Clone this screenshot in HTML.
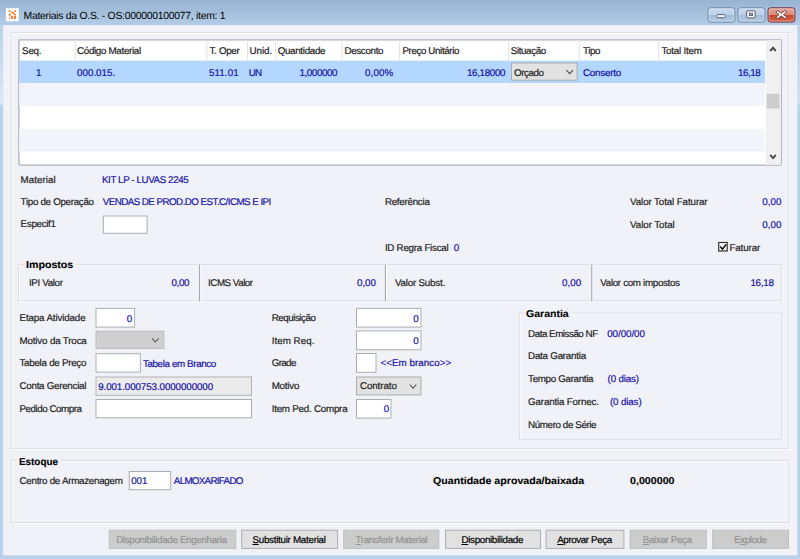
<!DOCTYPE html>
<html lang="pt-BR">
<head>
<meta charset="utf-8">
<title>Materiais da O.S.</title>
<style>
html,body{margin:0;padding:0;}
body{width:800px;height:559px;overflow:hidden;position:relative;background:#b9d1ea;font-family:"Liberation Sans",sans-serif;font-size:9.6px;}
#bg{position:absolute;left:0;top:0;width:800px;height:559px;display:block;}
.t{position:absolute;white-space:pre;line-height:14px;height:14px;font-size:9.8px;text-rendering:geometricPrecision;-webkit-text-stroke:0.2px currentColor;}
.t u{text-decoration:underline;text-underline-offset:1px;text-decoration-thickness:1px;}
</style>
</head>
<body>
<svg id="bg" width="800" height="559" viewBox="0 0 800 559">
<defs>
<linearGradient id="gt" x1="0" y1="0" x2="0" y2="1"><stop offset="0" stop-color="#98b3d2"/><stop offset="0.5" stop-color="#a5c0dc"/><stop offset="1" stop-color="#b3cde8"/></linearGradient>
<linearGradient id="gs" x1="0" y1="0" x2="0" y2="1"><stop offset="0" stop-color="#b9d1ea"/><stop offset="1" stop-color="#dde8f5"/></linearGradient>
<linearGradient id="gs2" x1="0" y1="0" x2="0" y2="1"><stop offset="0" stop-color="#b9d1ea"/><stop offset="1" stop-color="#d2e0f1"/></linearGradient>
<linearGradient id="gb" x1="0" y1="0" x2="0" y2="1"><stop offset="0" stop-color="#c6d8ee"/><stop offset="0.48" stop-color="#bcd0e9"/><stop offset="0.52" stop-color="#a3bcd9"/><stop offset="1" stop-color="#b4cbe6"/></linearGradient>
<linearGradient id="gr" x1="0" y1="0" x2="0" y2="1"><stop offset="0" stop-color="#e9a99a"/><stop offset="0.48" stop-color="#de8674"/><stop offset="0.52" stop-color="#c7452a"/><stop offset="1" stop-color="#d4674b"/></linearGradient>
</defs>
<rect x="0" y="0" width="800" height="559" fill="#b9d1ea"/><rect x="0" y="0" width="800" height="25.5" fill="url(#gt)"/>
<rect x="0" y="25" width="3.5" height="79.6" fill="url(#gs)"/>
<rect x="796.8" y="25" width="3.2" height="79.6" fill="url(#gs2)"/>
<rect x="3.00" y="25.00" width="794.50" height="530.50" fill="#e4ebf5"/>
<rect x="3.50" y="25.50" width="793.50" height="529.50" fill="#f1f2f8"/>
<g transform="translate(5.9 8.2)"><rect width="12.8" height="13.1" fill="#fefefe"/><g fill="#fb7c2c" stroke="#fb7c2c" stroke-linecap="round"><circle cx="3.7" cy="3.1" r="1" stroke="none"/><circle cx="9.2" cy="3.1" r="0.95" stroke="none"/><line x1="5.9" y1="4.0" x2="9.3" y2="6.5" stroke-width="1.6"/><ellipse cx="3.9" cy="6.5" rx="1.05" ry="1.15" stroke="none" transform="rotate(35 3.9 6.5)"/><circle cx="3.6" cy="10.0" r="0.7" stroke="none"/><rect x="4.9" y="7.6" width="2" height="3.2" rx="0.6" stroke="none"/><rect x="8.1" y="7.5" width="2" height="3.3" rx="0.6" stroke="none"/></g></g>
<rect x="708.10" y="7.80" width="26.80" height="14.30" fill="url(#gb)" stroke="#6f86a3" stroke-width="1" rx="2.5"/>
<rect x="709.10" y="8.80" width="24.80" height="12.30" fill="none" stroke="rgba(255,255,255,0.4)" stroke-width="1" rx="1.8"/>
<rect x="738.10" y="7.80" width="26.80" height="14.30" fill="url(#gb)" stroke="#6f86a3" stroke-width="1" rx="2.5"/>
<rect x="739.10" y="8.80" width="24.80" height="12.30" fill="none" stroke="rgba(255,255,255,0.4)" stroke-width="1" rx="1.8"/>
<rect x="768.10" y="7.80" width="26.80" height="14.30" fill="url(#gr)" stroke="#70303a" stroke-width="1" rx="2.5"/>
<rect x="769.10" y="8.80" width="24.80" height="12.30" fill="none" stroke="rgba(255,255,255,0.4)" stroke-width="1" rx="1.8"/>
<rect x="716.70" y="14.60" width="8.80" height="3.10" fill="#f3f3f5" stroke="#5a6270" stroke-width="1" rx="1"/>
<rect x="746.70" y="10.80" width="8.50" height="7.10" fill="#f3f3f5" stroke="#5a6270" stroke-width="1" rx="1"/>
<rect x="749.45" y="13.25" width="3.10" height="2.30" fill="#8fa6c4" stroke="#5a6270" stroke-width="0.9"/>
<g transform="translate(774.8 9.1)"><path d="M2.6 1.3 L6.5 4.1 L10.4 1.3 L12 3.1 L8.7 5.5 L12 7.9 L10.4 9.7 L6.5 6.9 L2.6 9.7 L1 7.9 L4.3 5.5 L1 3.1 Z" fill="#f6f6f6" stroke="#5b4048" stroke-width="0.9" stroke-linejoin="round"/></g>
<rect x="12.00" y="33.50" width="777.70" height="416.00" fill="none" stroke="#fcfcfe" stroke-width="1"/>
<rect x="11.00" y="32.50" width="777.70" height="416.00" fill="none" stroke="#e0e0e4" stroke-width="1"/>
<rect x="18.90" y="39.90" width="762.30" height="125.20" fill="#fff" stroke="#b0b2ba" stroke-width="1.4" rx="1"/>
<rect x="19.20" y="60.60" width="745.90" height="22.50" fill="#b3d7ff"/>
<rect x="19.20" y="83.10" width="745.70" height="22.90" fill="#f3f4fa"/>
<rect x="19.20" y="128.80" width="745.70" height="22.80" fill="#f3f4fa"/>
<line x1="75.20" y1="40.20" x2="75.20" y2="60.40" stroke="#e3e3e3" stroke-width="1"/>
<line x1="206.80" y1="40.20" x2="206.80" y2="60.40" stroke="#e3e3e3" stroke-width="1"/>
<line x1="247.60" y1="40.20" x2="247.60" y2="60.40" stroke="#e3e3e3" stroke-width="1"/>
<line x1="275.70" y1="40.20" x2="275.70" y2="60.40" stroke="#e3e3e3" stroke-width="1"/>
<line x1="341.90" y1="40.20" x2="341.90" y2="60.40" stroke="#e3e3e3" stroke-width="1"/>
<line x1="399.40" y1="40.20" x2="399.40" y2="60.40" stroke="#e3e3e3" stroke-width="1"/>
<line x1="508.60" y1="40.20" x2="508.60" y2="60.40" stroke="#e3e3e3" stroke-width="1"/>
<line x1="579.30" y1="40.20" x2="579.30" y2="60.40" stroke="#e3e3e3" stroke-width="1"/>
<line x1="658.70" y1="40.20" x2="658.70" y2="60.40" stroke="#e3e3e3" stroke-width="1"/>
<rect x="765.90" y="40.20" width="15.00" height="124.60" fill="#f0f0f0"/>
<rect x="766.60" y="93.80" width="12.80" height="14.80" fill="#cdcdcd"/>
<path d="M770.20 51.00 L773.00 47.80 L775.80 51.00" fill="none" stroke="#484848" stroke-width="1.9"/>
<path d="M770.20 154.90 L773.00 158.10 L775.80 154.90" fill="none" stroke="#484848" stroke-width="1.9"/>
<rect x="511.50" y="63.00" width="65.60" height="17.20" fill="#e2e2e2" stroke="#acacac" stroke-width="1"/>
<path d="M566.40 70.10 L569.70 73.70 L573.00 70.10" fill="none" stroke="#4f4f4f" stroke-width="1.1"/>
<rect x="103.30" y="216.00" width="43.80" height="17.30" fill="#fff" stroke="#abadb3" stroke-width="1"/>
<rect x="718.70" y="242.50" width="8.50" height="8.50" fill="#fff" stroke="#303030" stroke-width="1.2"/>
<path d="M720.2 246.6 L722.4 249.2 L726 244.4" fill="none" stroke="#111" stroke-width="1.6"/>
<rect x="19.50" y="265.70" width="762.80" height="36.00" fill="none" stroke="#fcfcfe" stroke-width="1"/>
<rect x="18.50" y="264.70" width="762.80" height="36.00" fill="none" stroke="#dcdce0" stroke-width="1"/>
<rect x="24.00" y="258.00" width="52.00" height="12.00" fill="#f1f2f8"/>
<line x1="200.60" y1="264.70" x2="200.60" y2="301.20" stroke="#ffffff" stroke-width="1"/>
<line x1="199.60" y1="264.70" x2="199.60" y2="301.20" stroke="#a2a2a2" stroke-width="1"/>
<line x1="386.40" y1="264.70" x2="386.40" y2="301.20" stroke="#ffffff" stroke-width="1"/>
<line x1="385.40" y1="264.70" x2="385.40" y2="301.20" stroke="#a2a2a2" stroke-width="1"/>
<line x1="592.80" y1="264.70" x2="592.80" y2="301.20" stroke="#ffffff" stroke-width="1"/>
<line x1="591.80" y1="264.70" x2="591.80" y2="301.20" stroke="#a2a2a2" stroke-width="1"/>
<rect x="96.00" y="308.40" width="38.60" height="18.70" fill="#fff" stroke="#abadb3" stroke-width="1"/>
<rect x="96.00" y="331.20" width="67.90" height="17.40" fill="#cfcfcf" stroke="#bcbcbc" stroke-width="1"/>
<path d="M152.00 338.40 L155.30 342.00 L158.60 338.40" fill="none" stroke="#5a5a5a" stroke-width="1.1"/>
<rect x="96.00" y="353.70" width="44.40" height="18.40" fill="#fff" stroke="#abadb3" stroke-width="1"/>
<rect x="96.00" y="377.00" width="155.50" height="18.30" fill="#ebebeb" stroke="#b2b2b2" stroke-width="1"/>
<rect x="96.00" y="399.50" width="155.50" height="18.30" fill="#fff" stroke="#abadb3" stroke-width="1"/>
<rect x="356.50" y="308.40" width="64.50" height="18.70" fill="#fff" stroke="#abadb3" stroke-width="1"/>
<rect x="356.50" y="331.00" width="64.50" height="18.80" fill="#fff" stroke="#abadb3" stroke-width="1"/>
<rect x="356.50" y="353.50" width="19.50" height="18.80" fill="#fff" stroke="#abadb3" stroke-width="1"/>
<rect x="356.50" y="377.00" width="64.50" height="17.90" fill="#e2e2e2" stroke="#acacac" stroke-width="1"/>
<path d="M409.70 384.50 L413.00 388.10 L416.30 384.50" fill="none" stroke="#4f4f4f" stroke-width="1.1"/>
<rect x="356.50" y="399.50" width="34.50" height="18.60" fill="#fff" stroke="#abadb3" stroke-width="1"/>
<rect x="520.20" y="314.10" width="262.60" height="126.60" fill="none" stroke="#fcfcfe" stroke-width="1"/>
<rect x="519.20" y="313.10" width="262.60" height="126.60" fill="none" stroke="#dcdce0" stroke-width="1"/>
<rect x="524.00" y="307.00" width="48.00" height="12.00" fill="#f1f2f8"/>
<rect x="12.00" y="461.40" width="778.10" height="62.10" fill="none" stroke="#fcfcfe" stroke-width="1"/>
<rect x="11.00" y="460.40" width="778.10" height="62.10" fill="none" stroke="#dcdce0" stroke-width="1"/>
<rect x="16.50" y="454.00" width="44.00" height="12.00" fill="#f1f2f8"/>
<rect x="129.30" y="471.50" width="41.40" height="18.20" fill="#fff" stroke="#abadb3" stroke-width="1"/>
<rect x="109.20" y="530.20" width="126.60" height="18.20" fill="#cccccc" stroke="#bfbfbf" stroke-width="1"/>
<rect x="241.70" y="530.20" width="95.90" height="18.20" fill="#e1e1e1" stroke="#adadad" stroke-width="1"/>
<rect x="343.70" y="530.20" width="95.10" height="18.20" fill="#cccccc" stroke="#bfbfbf" stroke-width="1"/>
<rect x="445.60" y="530.20" width="95.00" height="18.20" fill="#e1e1e1" stroke="#adadad" stroke-width="1"/>
<rect x="546.10" y="530.20" width="77.80" height="18.20" fill="#e1e1e1" stroke="#adadad" stroke-width="1"/>
<rect x="630.10" y="530.20" width="76.30" height="18.20" fill="#cccccc" stroke="#bfbfbf" stroke-width="1"/>
<rect x="712.60" y="530.20" width="75.90" height="18.20" fill="#cccccc" stroke="#bfbfbf" stroke-width="1"/>
</svg>
<span class="t" style="left:23.5px;top:10px;color:#000;letter-spacing:-0.27px;-webkit-text-stroke:0;font-size:10.4px;">Materiais da O.S. - OS:000000100077, item: 1</span>
<span class="t" style="left:22.1px;top:45px;color:#1e1e1e;letter-spacing:-0.24px;">Seq.</span>
<span class="t" style="left:77px;top:45px;color:#1e1e1e;letter-spacing:-0.32px;">Código Material</span>
<span class="t" style="left:209.5px;top:45px;color:#1e1e1e;letter-spacing:-0.31px;">T. Oper</span>
<span class="t" style="left:249.5px;top:45px;color:#1e1e1e;letter-spacing:-0.04px;">Unid.</span>
<span class="t" style="left:277.7px;top:45px;color:#1e1e1e;letter-spacing:-0.32px;">Quantidade</span>
<span class="t" style="left:344.4px;top:45px;color:#1e1e1e;letter-spacing:-0.33px;">Desconto</span>
<span class="t" style="left:402.4px;top:45px;color:#1e1e1e;letter-spacing:-0.39px;">Preço Unitário</span>
<span class="t" style="left:510.8px;top:45px;color:#1e1e1e;letter-spacing:-0.4px;">Situação</span>
<span class="t" style="left:583px;top:45px;color:#1e1e1e;letter-spacing:-0.42px;">Tipo</span>
<span class="t" style="left:661.4px;top:45px;color:#1e1e1e;letter-spacing:-0.22px;">Total Item</span>
<span class="t" style="left:36px;top:67px;color:#1812a6;">1</span>
<span class="t" style="left:77px;top:67px;color:#1812a6;letter-spacing:0.01px;">000.015.</span>
<span class="t" style="left:208.9px;top:67px;color:#1812a6;letter-spacing:0.12px;">511.01</span>
<span class="t" style="left:248.7px;top:67px;color:#1812a6;letter-spacing:-0.8px;">UN</span>
<span class="t" style="left:299.5px;top:67px;color:#1812a6;letter-spacing:-0.42px;">1,000000</span>
<span class="t" style="left:365px;top:67px;color:#1812a6;letter-spacing:0.13px;">0,00%</span>
<span class="t" style="left:467px;top:67px;color:#1812a6;letter-spacing:-0.34px;">16,18000</span>
<span class="t" style="left:514px;top:67px;color:#1e1e1e;letter-spacing:-0.44px;">Orçado</span>
<span class="t" style="left:583px;top:67px;color:#1812a6;letter-spacing:-0.21px;">Conserto</span>
<span class="t" style="left:738px;top:67px;color:#1812a6;letter-spacing:-0.47px;">16,18</span>
<span class="t" style="left:20.6px;top:174px;color:#1e1e1e;letter-spacing:0.03px;">Material</span>
<span class="t" style="left:102px;top:174px;color:#1812a6;letter-spacing:-0.42px;">KIT LP - LUVAS 2245</span>
<span class="t" style="left:20.6px;top:196px;color:#1e1e1e;letter-spacing:-0.31px;">Tipo de Operação</span>
<span class="t" style="left:102.7px;top:196px;color:#1812a6;letter-spacing:-0.55px;">VENDAS DE PROD.DO EST.C/ICMS E IPI</span>
<span class="t" style="left:20.6px;top:218px;color:#1e1e1e;letter-spacing:-0.32px;">Especif1</span>
<span class="t" style="left:384.9px;top:196px;color:#1e1e1e;letter-spacing:-0.27px;">Referência</span>
<span class="t" style="left:630.1px;top:196px;color:#1e1e1e;letter-spacing:-0.12px;">Valor Total Faturar</span>
<span class="t" style="left:762.3px;top:196px;color:#1812a6;letter-spacing:0.03px;">0,00</span>
<span class="t" style="left:630.1px;top:219px;color:#1e1e1e;letter-spacing:-0.08px;">Valor Total</span>
<span class="t" style="left:762.3px;top:219px;color:#1812a6;letter-spacing:0.03px;">0,00</span>
<span class="t" style="left:384.9px;top:242px;color:#1e1e1e;letter-spacing:-0.27px;">ID Regra Fiscal</span>
<span class="t" style="left:453.7px;top:242px;color:#1812a6;">0</span>
<span class="t" style="left:729.4px;top:242px;color:#1e1e1e;letter-spacing:-0.12px;">Faturar</span>
<span class="t" style="left:26.2px;top:259px;color:#000;transform-origin:0 0;transform:scaleX(1.063);font-weight:bold;-webkit-text-stroke:0.1px currentColor;font-size:10px;">Impostos</span>
<span class="t" style="left:28.9px;top:277px;color:#1e1e1e;letter-spacing:-0.35px;">IPI Valor</span>
<span class="t" style="left:171.4px;top:277px;color:#1812a6;letter-spacing:-0.31px;">0,00</span>
<span class="t" style="left:208.1px;top:277px;color:#1e1e1e;letter-spacing:-0.49px;">ICMS Valor</span>
<span class="t" style="left:357px;top:277px;color:#1812a6;letter-spacing:-0.07px;">0,00</span>
<span class="t" style="left:395px;top:277px;color:#1e1e1e;letter-spacing:-0.22px;">Valor Subst.</span>
<span class="t" style="left:562px;top:277px;color:#1812a6;letter-spacing:0.03px;">0,00</span>
<span class="t" style="left:600.3px;top:277px;color:#1e1e1e;letter-spacing:-0.33px;">Valor com impostos</span>
<span class="t" style="left:750.4px;top:277px;color:#1812a6;letter-spacing:-0.22px;">16,18</span>
<span class="t" style="left:19.5px;top:312px;color:#1e1e1e;letter-spacing:-0.14px;">Etapa Atividade</span>
<span class="t" style="left:126.7px;top:313px;color:#1812a6;">0</span>
<span class="t" style="left:19.5px;top:335px;color:#1e1e1e;letter-spacing:-0.17px;">Motivo da Troca</span>
<span class="t" style="left:19.5px;top:357px;color:#1e1e1e;letter-spacing:-0.28px;">Tabela de Preço</span>
<span class="t" style="left:142.9px;top:358px;color:#1812a6;letter-spacing:-0.37px;">Tabela em Branco</span>
<span class="t" style="left:19.5px;top:380px;color:#1e1e1e;letter-spacing:-0.28px;">Conta Gerencial</span>
<span class="t" style="left:98.2px;top:381px;color:#1812a6;letter-spacing:-0.1px;">9.001.000753.0000000000</span>
<span class="t" style="left:19.5px;top:403px;color:#1e1e1e;letter-spacing:-0.47px;">Pedido Compra</span>
<span class="t" style="left:271.7px;top:312px;color:#1e1e1e;letter-spacing:-0.48px;">Requisição</span>
<span class="t" style="left:413.2px;top:313px;color:#1812a6;">0</span>
<span class="t" style="left:271.7px;top:335px;color:#1e1e1e;letter-spacing:0.03px;">Item Req.</span>
<span class="t" style="left:413.2px;top:335px;color:#1812a6;">0</span>
<span class="t" style="left:271.7px;top:357px;color:#1e1e1e;letter-spacing:-0.64px;">Grade</span>
<span class="t" style="left:380.5px;top:357px;color:#1812a6;letter-spacing:0.03px;">&lt;&lt;Em branco&gt;&gt;</span>
<span class="t" style="left:271.7px;top:380px;color:#1e1e1e;letter-spacing:-0.24px;">Motivo</span>
<span class="t" style="left:359.9px;top:380px;color:#1e1e1e;letter-spacing:-0.09px;">Contrato</span>
<span class="t" style="left:271.7px;top:403px;color:#1e1e1e;letter-spacing:-0.24px;">Item Ped. Compra</span>
<span class="t" style="left:383.7px;top:403px;color:#1812a6;">0</span>
<span class="t" style="left:526.2px;top:308px;color:#000;transform-origin:0 0;transform:scaleX(1.053);font-weight:bold;-webkit-text-stroke:0.1px currentColor;font-size:10px;">Garantia</span>
<span class="t" style="left:528.1px;top:328px;color:#1e1e1e;letter-spacing:-0.48px;">Data Emissão NF</span>
<span class="t" style="left:607.2px;top:328px;color:#1812a6;letter-spacing:-0.06px;">00/00/00</span>
<span class="t" style="left:528.1px;top:350px;color:#1e1e1e;letter-spacing:-0.25px;">Data Garantia</span>
<span class="t" style="left:528.1px;top:373px;color:#1e1e1e;letter-spacing:-0.33px;">Tempo Garantia</span>
<span class="t" style="left:607.6px;top:373px;color:#1812a6;letter-spacing:-0.19px;">(0 dias)</span>
<span class="t" style="left:528.1px;top:396px;color:#1e1e1e;letter-spacing:-0.18px;">Garantia Fornec.</span>
<span class="t" style="left:609.9px;top:396px;color:#1812a6;letter-spacing:-0.13px;">(0 dias)</span>
<span class="t" style="left:528.1px;top:419px;color:#1e1e1e;letter-spacing:-0.4px;">Número de Série</span>
<span class="t" style="left:18.7px;top:456px;color:#000;transform-origin:0 0;transform:scaleX(0.988);font-weight:bold;-webkit-text-stroke:0.1px currentColor;font-size:10px;">Estoque</span>
<span class="t" style="left:19.5px;top:475px;color:#1e1e1e;letter-spacing:-0.28px;">Centro de Armazenagem</span>
<span class="t" style="left:131.2px;top:475px;color:#1812a6;letter-spacing:-0.05px;">001</span>
<span class="t" style="left:173.8px;top:475px;color:#1812a6;letter-spacing:-0.7px;">ALMOXARIFADO</span>
<span class="t" style="left:432.5px;top:475px;color:#000;transform-origin:0 0;transform:scaleX(1.062);font-weight:bold;-webkit-text-stroke:0.1px currentColor;font-size:10px;">Quantidade aprovada/baixada</span>
<span class="t" style="left:630.0px;top:475px;color:#000;transform-origin:0 0;transform:scaleX(1.068);font-weight:bold;-webkit-text-stroke:0.1px currentColor;font-size:10px;">0,000000</span>
<span class="t" style="left:116.2px;top:534px;color:#939393;letter-spacing:-0.34px;">Disponibilidade Engenharia</span>
<span class="t" style="left:252.5px;top:534px;color:#000;letter-spacing:-0.28px;"><u>S</u>ubstituir Material</span>
<span class="t" style="left:355.6px;top:534px;color:#939393;letter-spacing:-0.39px;"><u>T</u>ransferir Material</span>
<span class="t" style="left:461.5px;top:534px;color:#000;letter-spacing:-0.33px;"><u>D</u>isponibilidade</span>
<span class="t" style="left:557.2px;top:534px;color:#000;letter-spacing:-0.4px;"><u>A</u>provar Peça</span>
<span class="t" style="left:642.8px;top:534px;color:#939393;letter-spacing:-0.35px;"><u>B</u>aixar Peça</span>
<span class="t" style="left:734.2px;top:534px;color:#939393;letter-spacing:-0.46px;">E<u>x</u>plode</span>
</body>
</html>
